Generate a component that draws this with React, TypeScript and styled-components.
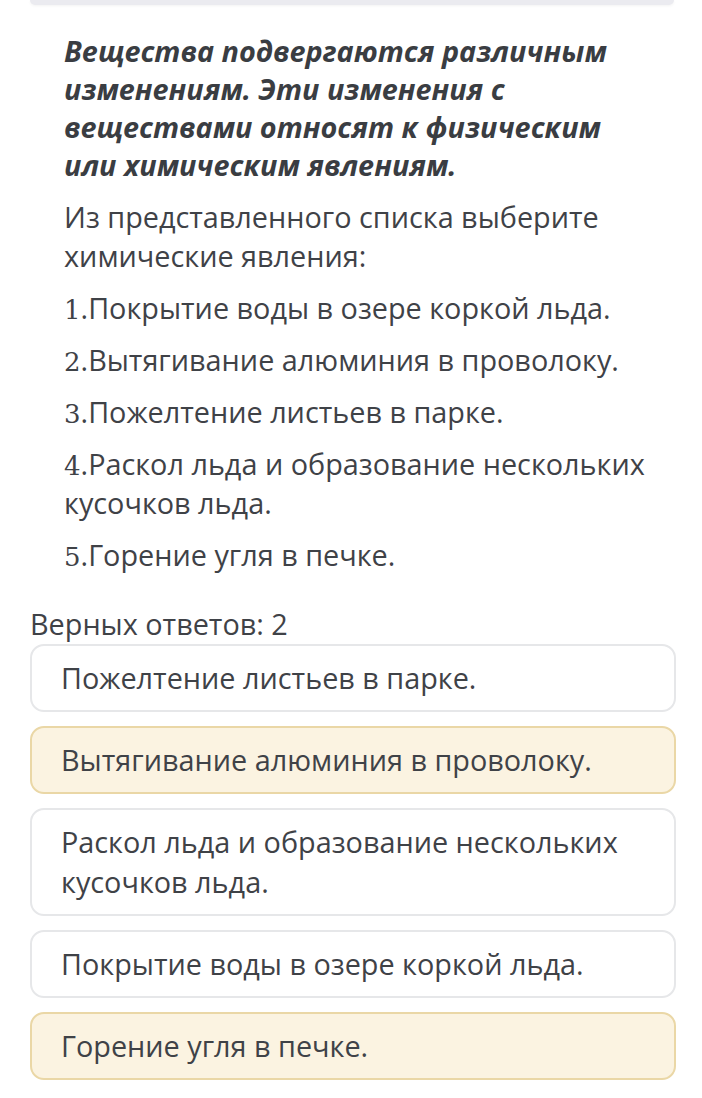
import React from "react";
import styled, { createGlobalStyle } from "styled-components";

const Global = createGlobalStyle`
  html, body { margin: 0; padding: 0; background: #ffffff; }
  body { font-family: "Open Sans", "Noto Sans", sans-serif; color: #3c3f44; }
`;

const Page = styled.div`
  width: 702px;
  display: flex;
  flex-direction: column;
`;

const TopBar = styled.div`
  margin: 0 28px 0 30px;
  height: 5px;
  background: #ebebf0;
  border-radius: 0 0 8px 8px;
  box-shadow: 0 1px 3px rgba(0, 0, 0, 0.05);
`;

const Question = styled.div`
  padding: 27px 40px 0 64px;
  display: flex;
  flex-direction: column;
`;

const Heading = styled.p`
  margin: 0;
  max-width: 575px;
  font-weight: 700;
  font-style: italic;
  font-size: 28.8px;
  line-height: 38px;
  color: #3a3d42;
`;

const Para = styled.p`
  margin: 13px 0 0 0;
  font-size: 28.8px;
  line-height: 39px;
  color: #3f4247;
`;

const Num = styled.span`
  font-family: "DejaVu Serif", "Liberation Serif", serif;
  font-size: 26px;
  line-height: 0;
`;

const Count = styled.div`
  margin: 30px 0 1px 30px;
  font-size: 28.8px;
  line-height: 39px;
  color: #3f4247;
`;

const Options = styled.div`
  margin: 0 26px 0 30px;
  display: flex;
  flex-direction: column;
  gap: 14px;
`;

const Option = styled.div<{ $selected?: boolean }>`
  padding: 12px 28px 12px 29px;
  border-radius: 14px;
  border: 2px solid ${(p) => (p.$selected ? "#ead7a6" : "#e6e7e9")};
  background: ${(p) => (p.$selected ? "#fbf3e1" : "#ffffff")};
  font-size: 28.8px;
  line-height: 40px;
  color: #3f4247;
`;

const items = [
  "Покрытие воды в озере коркой льда.",
  "Вытягивание алюминия в проволоку.",
  "Пожелтение листьев в парке.",
  "Раскол льда и образование нескольких кусочков льда.",
  "Горение угля в печке.",
];

const options: { text: string; selected?: boolean }[] = [
  { text: "Пожелтение листьев в парке." },
  { text: "Вытягивание алюминия в проволоку.", selected: true },
  { text: "Раскол льда и образование нескольких кусочков льда." },
  { text: "Покрытие воды в озере коркой льда." },
  { text: "Горение угля в печке.", selected: true },
];

export default function App() {
  return (
    <Page>
      <Global />
      <TopBar />
      <Question>
        <Heading>
          Вещества подвергаются различным изменениям. Эти изменения с веществами относят к
          физическим или химическим явлениям.
        </Heading>
        <Para>Из представленного списка выберите химические явления:</Para>
        {items.map((t, i) => (
          <Para key={i}>
            <Num>{i + 1}</Num>.{t}
          </Para>
        ))}
      </Question>
      <Count>Верных ответов: 2</Count>
      <Options>
        {options.map((o, i) => (
          <Option key={i} $selected={o.selected}>
            {o.text}
          </Option>
        ))}
      </Options>
    </Page>
  );
}
